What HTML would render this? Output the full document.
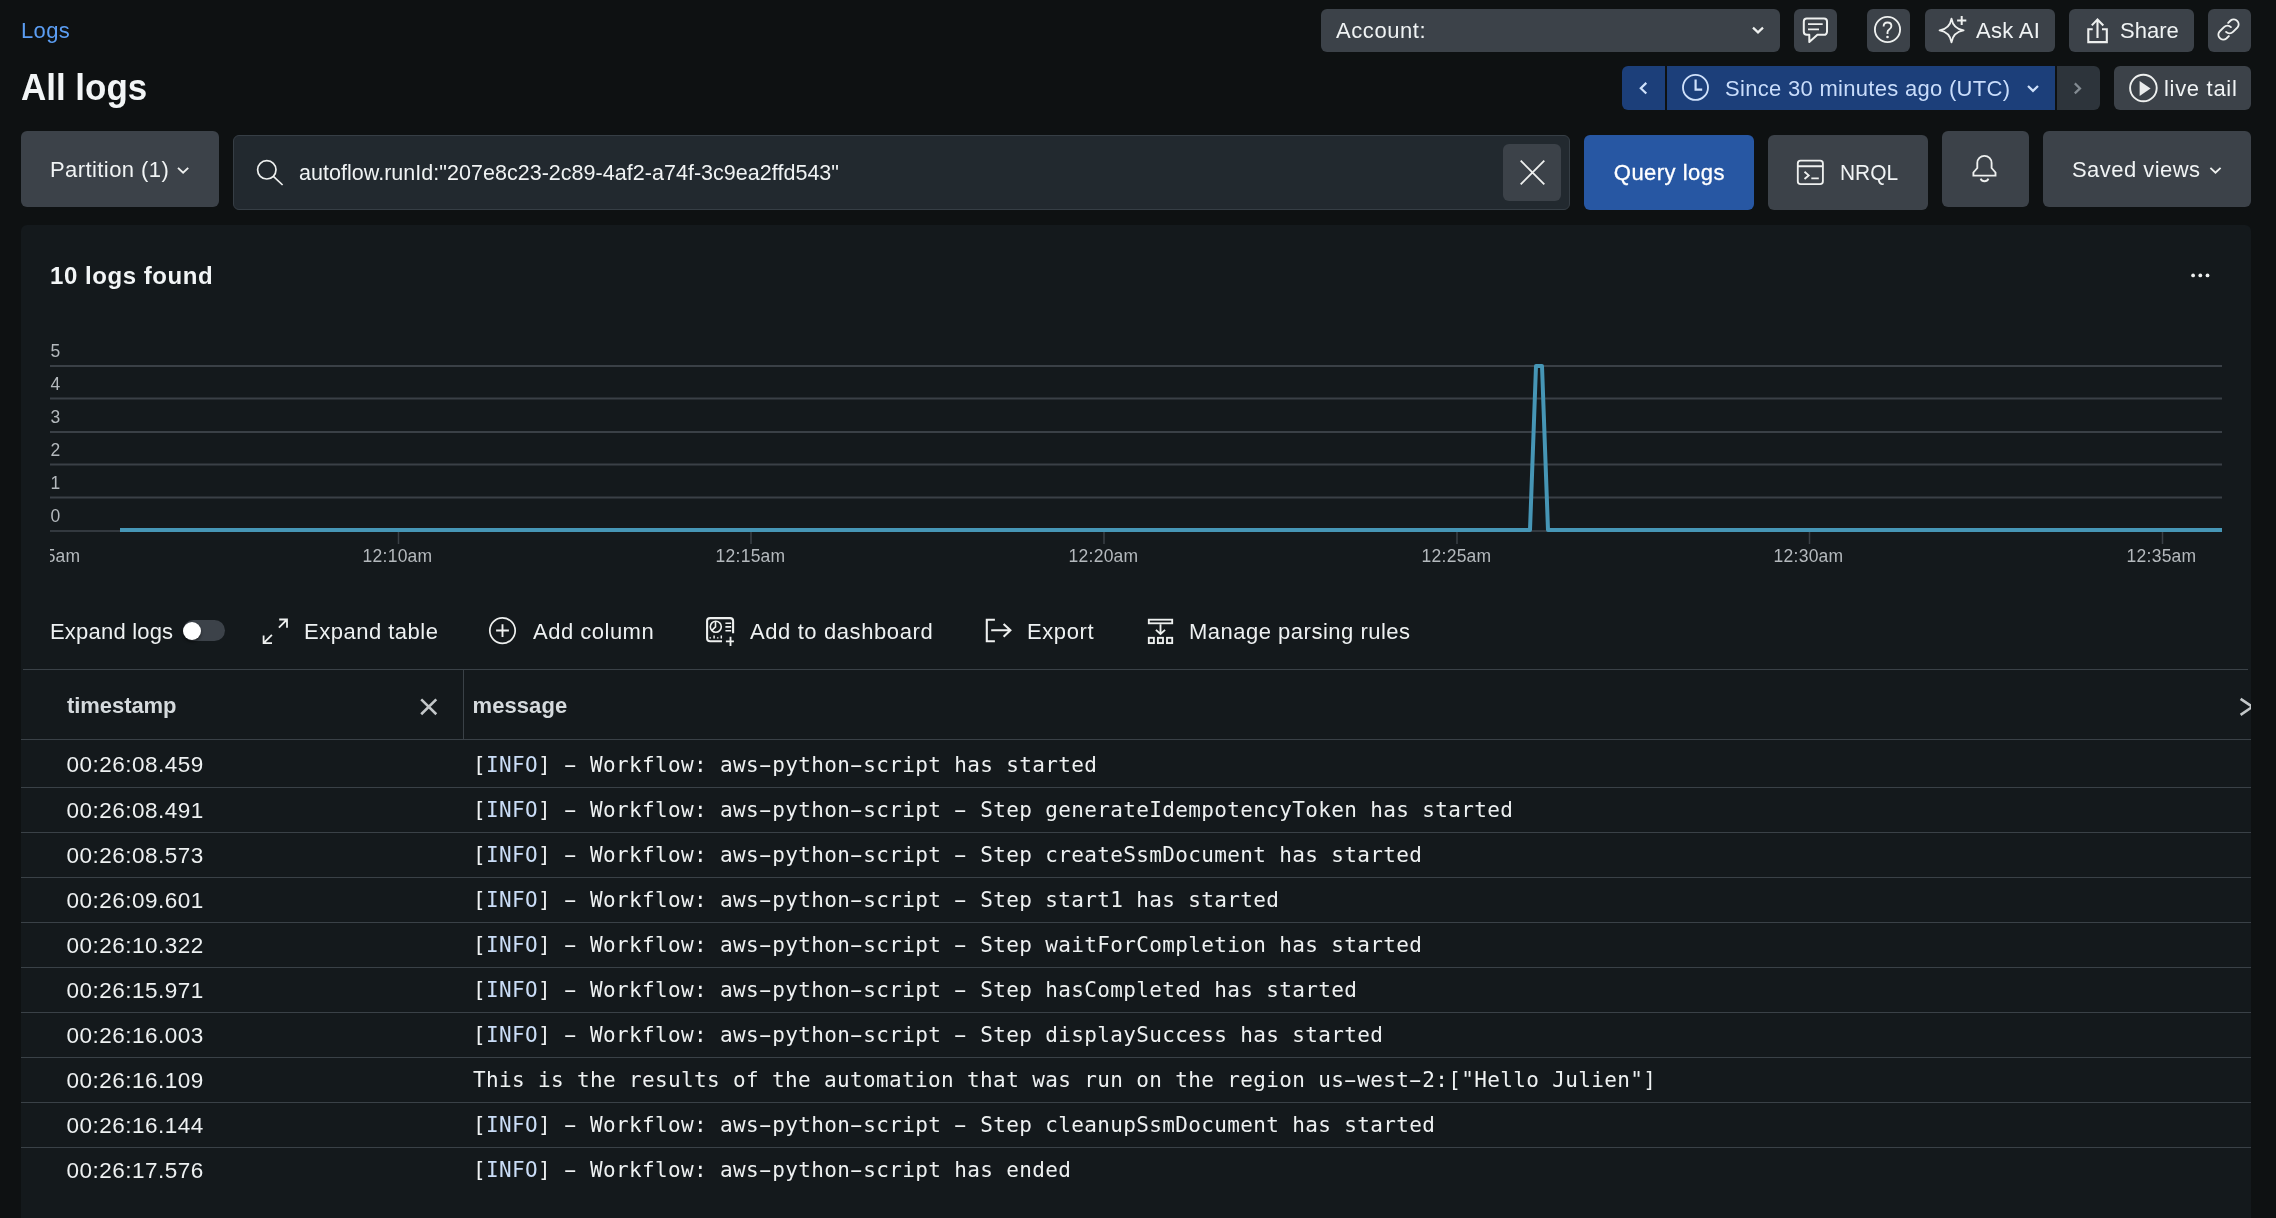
<!DOCTYPE html>
<html lang="en">
<head>
<meta charset="utf-8">
<title>All logs</title>
<style>
*{box-sizing:border-box;margin:0;padding:0}
html,body{width:2276px;height:1218px;overflow:hidden;background:#0e1112}
body{position:relative;will-change:transform;font-family:"Liberation Sans",sans-serif;color:#f0f3f4;font-size:21px}
.a{position:absolute}
.btn{position:absolute;background:#3c4249;border-radius:6px}
.t{position:absolute;white-space:nowrap;line-height:1}
svg{position:absolute;overflow:visible}
.ic{fill:none;stroke:#f0f3f4;stroke-width:1.5;stroke-linecap:butt;stroke-linejoin:miter}
#panel{left:21px;top:225px;width:2230px;height:1000px;background:#14191c;border-radius:6px}
.hl{position:absolute;left:21px;width:2230px;height:1px;background:#3a4147}
.ts{position:absolute;left:66.5px;white-space:nowrap;line-height:1;font-size:22.5px;color:#eef1f2;letter-spacing:.49px}
.msg{position:absolute;left:473px;white-space:pre;line-height:1;font-family:"DejaVu Sans Mono","Liberation Mono",monospace;font-size:21px;letter-spacing:.36px;color:#eef1f2}
.msg b{font-weight:normal;display:inline-block;transform:scaleX(1.85)}
.msg i{font-style:normal;color:#cbdef8}
.tb{color:#eef1f2}
.yl{position:absolute;left:50.5px;font-size:17.5px;color:#b4b9bd;line-height:1}
.xl{position:absolute;font-size:17.5px;color:#b4b9bd;line-height:1;white-space:nowrap;transform:translateX(-50%);letter-spacing:.25px}
</style>
</head>
<body>

<!-- header row 1 -->
<div class="t" id="logs" style="left:21.0px;top:20.2px;font-size:22px;color:#5b9df2;letter-spacing:0.37px">Logs</div>
<div class="t" id="title" style="left:20.9px;top:68.5px;font-size:37.5px;font-weight:bold;color:#f2f5f6;transform-origin:0 0;transform:scaleX(.932)">All logs</div>

<div class="btn" style="left:1321px;top:9px;width:459px;height:43px"></div>
<div class="t" id="acct" style="left:1336.0px;top:20.4px;font-size:22px;letter-spacing:0.57px">Account:</div>
<div class="btn" style="left:1794px;top:9px;width:43px;height:43px"></div>
<div class="btn" style="left:1867px;top:9px;width:43px;height:43px"></div>
<div class="btn" style="left:1925px;top:9px;width:130px;height:43px"></div>
<div class="t" id="askai" style="left:1976.0px;top:20.4px;font-size:22px;letter-spacing:0.3px">Ask AI</div>
<div class="btn" style="left:2069px;top:9px;width:125px;height:43px"></div>
<div class="t" id="share" style="left:2120.0px;top:20.4px;font-size:22px;letter-spacing:0.0px">Share</div>
<div class="btn" style="left:2208px;top:9px;width:43px;height:43px"></div>

<!-- header row 2 -->
<div class="a" style="left:1622px;top:66px;width:43px;height:44px;background:#1c3f7a;border-radius:6px 0 0 6px"></div>
<div class="a" style="left:1667px;top:66px;width:388px;height:44px;background:#1c3f7a"></div>
<div class="a" style="left:2057px;top:66px;width:43px;height:44px;background:#2d343b;border-radius:0 6px 6px 0"></div>
<div class="t" id="since" style="left:1725.0px;top:78.4px;font-size:22px;color:#c9ddfb;letter-spacing:0.3px">Since 30 minutes ago (UTC)</div>
<div class="btn" style="left:2114px;top:66px;width:137px;height:44px"></div>
<div class="t" id="live" style="left:2164.0px;top:78.4px;font-size:22px;letter-spacing:0.69px">live tail</div>

<!-- query row -->
<div class="btn" style="left:21px;top:131px;width:198px;height:76px"></div>
<div class="t" id="part" style="left:50px;top:159.4px;font-size:22px;letter-spacing:0.42px">Partition (1)</div>
<div class="a" style="left:233px;top:135px;width:1337px;height:75px;background:#22292f;border:1px solid #363e45;border-radius:6px"></div>
<div class="t" id="query" style="left:299.0px;top:162.6px;font-size:21.5px;color:#f0f3f4;letter-spacing:0.03px">autoflow.runId:"207e8c23-2c89-4af2-a74f-3c9ea2ffd543"</div>
<div class="btn" style="left:1503px;top:144px;width:58px;height:57px"></div>
<div class="a" style="left:1584px;top:135px;width:170px;height:75px;background:#2757a3;border-radius:6px"></div>
<div class="t" id="qlogs" style="-webkit-text-stroke:.3px #fff;left:1613.8px;top:162.0px;font-size:22px;letter-spacing:0.47px;color:#fff">Query logs</div>
<div class="btn" style="left:1768px;top:135px;width:160px;height:75px"></div>
<div class="t" id="nrql" style="left:1840px;top:162.4px;font-size:22px;transform-origin:0 0;transform:scaleX(.95)">NRQL</div>
<div class="btn" style="left:1942px;top:131px;width:87px;height:76px"></div>
<div class="btn" style="left:2043px;top:131px;width:208px;height:76px"></div>
<div class="t" id="saved" style="left:2072.0px;top:159.4px;font-size:22px;letter-spacing:0.45px">Saved views</div>

<!-- panel -->
<div class="a" id="panel"></div>
<div class="t" id="found" style="left:50px;top:263.8px;font-size:24px;font-weight:bold;color:#f2f5f6;letter-spacing:.55px">10 logs found</div>

<!-- chart -->
<svg id="chart" style="left:0;top:330px" width="2276" height="260" viewBox="0 330 2276 260">
<g stroke="#3a4046" stroke-width="2">
<line x1="50" x2="2222" y1="366" y2="366"/>
<line x1="50" x2="2222" y1="398.5" y2="398.5"/>
<line x1="50" x2="2222" y1="432" y2="432"/>
<line x1="50" x2="2222" y1="464.5" y2="464.5"/>
<line x1="50" x2="2222" y1="497.5" y2="497.5"/>
</g>
<line x1="50" x2="2222" y1="531" y2="531" stroke="#33393f" stroke-width="2"/>
<g stroke="#3a4046" stroke-width="1.5">
<line x1="398.5" x2="398.5" y1="532" y2="544"/>
<line x1="751" x2="751" y1="532" y2="544"/>
<line x1="1104" x2="1104" y1="532" y2="544"/>
<line x1="1457" x2="1457" y1="532" y2="544"/>
<line x1="1809.5" x2="1809.5" y1="532" y2="544"/>
<line x1="2162.5" x2="2162.5" y1="532" y2="544"/>
</g>
<polyline points="120,530 1530,530 1536,366 1542,366 1548,530 2222,530" fill="none" stroke="#4696b6" stroke-width="4" stroke-linejoin="round"/>
</svg>
<div class="yl" style="top:343px">5</div>
<div class="yl" style="top:376px">4</div>
<div class="yl" style="top:409px">3</div>
<div class="yl" style="top:442px">2</div>
<div class="yl" style="top:475px">1</div>
<div class="yl" style="top:508px">0</div>
<div class="a" style="left:50px;top:540px;width:2200px;height:34px;overflow:hidden">
<div class="xl" style="left:-4.5px;top:8px">12:05am</div>
<div class="xl" style="left:347.5px;top:8px">12:10am</div>
<div class="xl" style="left:700.5px;top:8px">12:15am</div>
<div class="xl" style="left:1053.5px;top:8px">12:20am</div>
<div class="xl" style="left:1406.5px;top:8px">12:25am</div>
<div class="xl" style="left:1758.5px;top:8px">12:30am</div>
<div class="xl" style="left:2111.5px;top:8px">12:35am</div>
</div>

<!-- toolbar -->
<div class="t tb" id="tb1" style="left:50px;top:620.9px;font-size:22px;letter-spacing:0.2px">Expand logs</div>
<div class="t tb" id="tb2" style="left:304px;top:620.9px;font-size:22px;letter-spacing:0.5px">Expand table</div>
<div class="t tb" id="tb3" style="left:533.0px;top:620.9px;font-size:22px;letter-spacing:0.5px">Add column</div>
<div class="t tb" id="tb4" style="left:750.0px;top:620.9px;font-size:22px;letter-spacing:0.6px">Add to dashboard</div>
<div class="t tb" id="tb5" style="left:1027.0px;top:620.9px;font-size:22px;letter-spacing:0.6px">Export</div>
<div class="t tb" id="tb6" style="left:1189.0px;top:620.9px;font-size:22px;letter-spacing:0.5px">Manage parsing rules</div>

<!-- table -->
<div class="hl" style="top:669px;left:23px;width:2225px"></div>
<div class="a" style="left:463px;top:670px;width:1px;height:69px;background:#3a4147"></div>
<div class="t" id="th1" style="left:67px;top:694.9px;font-size:22px;font-weight:bold;color:#d5dadd;letter-spacing:-0.06px">timestamp</div>
<div class="t" id="th2" style="left:472.5px;top:694.9px;font-size:22px;font-weight:bold;color:#d5dadd;letter-spacing:0.08px">message</div>
<div class="hl" style="top:739px"></div>

<div class="ts" style="top:754.0px">00:26:08.459</div>
<div class="msg" style="top:754.5px">[<i>INFO</i>] <b>-</b> Workflow: aws<b>-</b>python<b>-</b>script has started</div>
<div class="hl" style="top:787px"></div>
<div class="ts" style="top:799.5px">00:26:08.491</div>
<div class="msg" style="top:800.0px">[<i>INFO</i>] <b>-</b> Workflow: aws<b>-</b>python<b>-</b>script <b>-</b> Step generateIdempotencyToken has started</div>
<div class="hl" style="top:832px"></div>
<div class="ts" style="top:844.5px">00:26:08.573</div>
<div class="msg" style="top:845.0px">[<i>INFO</i>] <b>-</b> Workflow: aws<b>-</b>python<b>-</b>script <b>-</b> Step createSsmDocument has started</div>
<div class="hl" style="top:877px"></div>
<div class="ts" style="top:889.5px">00:26:09.601</div>
<div class="msg" style="top:890.0px">[<i>INFO</i>] <b>-</b> Workflow: aws<b>-</b>python<b>-</b>script <b>-</b> Step start1 has started</div>
<div class="hl" style="top:922px"></div>
<div class="ts" style="top:934.5px">00:26:10.322</div>
<div class="msg" style="top:935.0px">[<i>INFO</i>] <b>-</b> Workflow: aws<b>-</b>python<b>-</b>script <b>-</b> Step waitForCompletion has started</div>
<div class="hl" style="top:967px"></div>
<div class="ts" style="top:979.5px">00:26:15.971</div>
<div class="msg" style="top:980.0px">[<i>INFO</i>] <b>-</b> Workflow: aws<b>-</b>python<b>-</b>script <b>-</b> Step hasCompleted has started</div>
<div class="hl" style="top:1012px"></div>
<div class="ts" style="top:1024.5px">00:26:16.003</div>
<div class="msg" style="top:1025.0px">[<i>INFO</i>] <b>-</b> Workflow: aws<b>-</b>python<b>-</b>script <b>-</b> Step displaySuccess has started</div>
<div class="hl" style="top:1057px"></div>
<div class="ts" style="top:1069.5px">00:26:16.109</div>
<div class="msg" style="top:1070.0px">This is the results of the automation that was run on the region us<b>-</b>west<b>-</b>2:["Hello Julien"]</div>
<div class="hl" style="top:1102px"></div>
<div class="ts" style="top:1114.5px">00:26:16.144</div>
<div class="msg" style="top:1115.0px">[<i>INFO</i>] <b>-</b> Workflow: aws<b>-</b>python<b>-</b>script <b>-</b> Step cleanupSsmDocument has started</div>
<div class="hl" style="top:1147px"></div>
<div class="ts" style="top:1159.5px">00:26:17.576</div>
<div class="msg" style="top:1160.0px">[<i>INFO</i>] <b>-</b> Workflow: aws<b>-</b>python<b>-</b>script has ended</div>

<!-- icons -->
<svg id="icons" style="left:0;top:0" width="2276" height="1218" viewBox="0 0 2276 1218" fill="none" stroke="#eef0ef" stroke-width="1.85" stroke-linecap="butt" stroke-linejoin="miter">
<!-- account chevron -->
<path d="M1753 27.6 L1758 32.4 L1763 27.6" stroke-width="2.2"/>
<!-- comment -->
<path d="M1806.8 18.6 H1824 a3 3 0 0 1 3 3 V31.8 a3 3 0 0 1 -3 3 H1817.4 L1809.3 42 V34.8 H1806.8 a3 3 0 0 1 -3 -3 V21.6 a3 3 0 0 1 3 -3 Z" stroke-width="2" stroke-linejoin="round"/>
<path d="M1808 24.1 H1822.7 M1808 29.4 H1819"/>
<!-- help -->
<circle cx="1887.5" cy="29.5" r="12.6"/>
<path d="M1883.6 26.4 C1883.6 23.8 1885.3 22.5 1887.5 22.5 C1889.8 22.5 1891.4 23.9 1891.4 26 C1891.4 27.7 1890.4 28.6 1889.2 29.4 C1888 30.2 1887.5 31 1887.5 32.3 V34"/>
<circle cx="1887.5" cy="37" r="1.3" fill="#eef0ef" stroke="none"/>
<!-- sparkle -->
<path d="M1951.5 18.6 Q1953.2 28.7 1963.6 30.4 Q1953.2 32.1 1951.5 42.3 Q1949.8 32.1 1939.6 30.4 Q1949.8 28.7 1951.5 18.6 Z" stroke-linejoin="round"/>
<path d="M1957.1 20.4 H1966.3 M1961.7 15.9 V24.9" stroke-width="2"/>
<!-- share -->
<path d="M2092.7 29.3 H2088.3 V42.1 H2106.8 V29.3 H2102 M2097.5 38.1 V19.6 M2091.8 25.4 L2097.5 19.4 L2103.3 25.4" stroke-width="2.1"/>
<!-- link -->
<path d="M2228.2 23.2 L2230.5 20.9 A4.7 4.7 0 0 1 2237.1 27.5 L2232.8 31.8 A4.7 4.7 0 0 1 2226.2 31.8 M2228.8 35.8 L2226.5 38.1 A4.7 4.7 0 0 1 2219.9 31.5 L2224.2 27.2 A4.7 4.7 0 0 1 2230.8 27.2" stroke-width="1.85" stroke-linecap="round" transform="translate(2228.5 29.5) scale(1.05) translate(-2228.5 -29.5)"/>
<!-- time picker -->
<g stroke="#cfe1fb">
<path d="M1646.3 82.9 L1640.8 88.2 L1646.3 93.5" stroke-width="2.2"/>
<circle cx="1695.5" cy="87.4" r="12.5"/>
<path d="M1695.6 79.4 V89.7 H1702.2" stroke-width="2.2"/>
<path d="M2028 86 L2033 90.9 L2038 86" stroke-width="2.2"/>
</g>
<path d="M2074.8 83.4 L2080 88.4 L2074.8 93.4" stroke="#838b92" stroke-width="2.2"/>
<!-- live tail -->
<circle cx="2143.4" cy="88" r="13.3" stroke-width="1.9"/>
<path d="M2139.6 81 V95.9 L2150.6 88.5 Z" fill="#eaecec" stroke="none"/>
<!-- partition chevron -->
<path d="M178 167.8 L183.1 172.7 L188.2 167.8"/>
<!-- search -->
<circle cx="266.8" cy="169.8" r="9.2" stroke-width="1.7"/>
<path d="M273.4 176.4 L282.6 185" stroke-width="1.7"/>
<!-- clear X -->
<path d="M1520.7 160.7 L1544.3 184.3 M1544.3 160.7 L1520.7 184.3"/>
<!-- nrql -->
<rect x="1797.8" y="160.6" width="25.1" height="23.5" rx="2.8"/>
<path d="M1797.8 166.2 H1822.9 M1804.5 171.8 L1808.7 175.4 L1804.5 179 M1811.3 178.4 H1818.8"/>
<!-- bell -->
<path d="M1977.3 163 a7.15 7.15 0 0 1 14.3 0 V168 L1995.5 172.5 V175.6 H1973.4 V172.5 L1977.3 168 Z"/>
<path d="M1980.6 178.6 A4.2 4.2 0 0 0 1988.4 178.6"/>
<!-- saved chevron -->
<path d="M2210.4 167.8 L2215.5 172.7 L2220.6 167.8"/>
<!-- dots -->
<g fill="#eef0ef" stroke="none"><circle cx="2193.1" cy="275.4" r="1.9"/><circle cx="2200.3" cy="275.4" r="1.9"/><circle cx="2207.5" cy="275.4" r="1.9"/></g>
<!-- expand -->
<path d="M279.2 619.5 H287 V627.7 M287 619.5 L278.9 627.6 M263.6 635.5 V643.2 H272 M263.6 643.2 L271.9 634.9" stroke-width="1.8"/>
<!-- plus circle -->
<circle cx="502.5" cy="630.6" r="12.7" stroke-width="1.7"/>
<path d="M496.1 630.5 H508.9 M502.5 624.2 V636.9" stroke-width="1.9"/>
<!-- dashboard -->
<path d="M722 641.3 H710.1 a3 3 0 0 1 -3 -3 V621.1 a3 3 0 0 1 3 -3 H730.1 a3 3 0 0 1 3 3 V633.2" stroke-width="2.1"/>
<circle cx="715.8" cy="626.8" r="5.5" stroke-width="1.6"/>
<path d="M715.5 621.5 V626.8 L711.8 630.4 M725.4 623.3 H731.2 M725.4 626.9 H731.2 M725.4 630.7 H731.2" stroke-width="1.6"/>
<path d="M710.2 637.3 V638.6 M714.1 635.5 V638.6 M717.7 637.3 V638.6 M721.3 635.5 V638.6" stroke-width="1.5"/>
<path d="M725.9 641.4 H733.9 M730.5 636.8 V646"/>
<!-- export -->
<path d="M994.9 619.8 H986.8 V641.3 H994.9 M991.2 630.3 H1010.6 M1003.6 624 L1010.4 630.3 L1003.6 636.7" stroke-width="2.1"/>
<!-- parsing -->
<rect x="1148.8" y="619.7" width="23.4" height="3.6"/>
<path d="M1160.5 624.3 V633.6 M1155.9 629.9 L1160.5 633.9 L1165.1 629.9"/>
<rect x="1148.8" y="637.8" width="5.1" height="5.3"/><rect x="1157.9" y="637.8" width="5.1" height="5.3"/><rect x="1167" y="637.8" width="5.2" height="5.3"/>
<!-- header X -->
<path d="M421.2 699.4 L436.3 714.2 M436.3 699.4 L421.2 714.2" stroke="#c3c7c9" stroke-width="2.6"/>
</svg>
<!-- toggle -->
<div class="a" style="left:183px;top:620px;width:42px;height:21px;border-radius:11px;background:#3c4249"></div>
<div class="a" style="left:183px;top:621.8px;width:18.4px;height:18.4px;border-radius:50%;background:#fff;box-shadow:0 2px 3px rgba(0,0,0,.45)"></div>
<!-- header right chevron (clipped by panel edge) -->
<div class="a" style="left:2230px;top:690px;width:21px;height:34px;overflow:hidden"><svg style="left:0;top:0" width="30" height="34" viewBox="2230 690 30 34" fill="none" stroke="#c3c7c9" stroke-width="2.6"><path d="M2240.6 698.8 L2252.4 706.8 L2240.6 714.8"/></svg></div>

</body>
</html>
